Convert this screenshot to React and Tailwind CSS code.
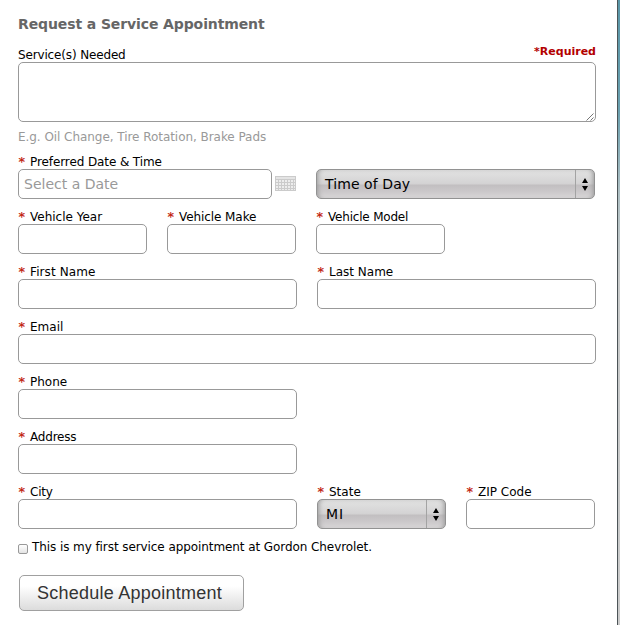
import React from 'react'

const Label = ({ children, tracking = '' }) => (
  <span className="flex h-[15px] items-center whitespace-nowrap text-[12px] leading-[15px] text-black">
    <span className="w-3 shrink-0 pl-[0.5px] text-[13px] text-[#c01808] [-webkit-text-stroke:0.2px_#c01808]">*</span>
    <span className={`pt-[2px] ${tracking}`}>{children}</span>
  </span>
)

const inputClass =
  'block h-[30px] w-full rounded-[5px] border border-[#999] bg-white px-[5px] text-[14px] text-black outline-none placeholder:text-[#999] placeholder:opacity-100'

const Field = ({ label, width, tracking }) => (
  <label className={`block ${width}`}>
    <Label tracking={tracking}>{label}</Label>
    <input type="text" className={inputClass} />
  </label>
)

const SelectBox = ({ value, tracking = '' }) => (
  <button
    type="button"
    className="flex h-[30px] w-full items-center rounded-[5px] border border-[#929292] bg-[linear-gradient(to_bottom,#dadada_0%,#dedede_15%,#d4d3d4_48%,#c2bfc1_55%,#cac7c9_75%,#d8d6d7_100%)] text-left text-[14px] text-black shadow-[inset_5px_0_5px_-4px_#999,inset_-5px_0_5px_-4px_#999]"
  >
    <span className={`flex-1 pl-2 ${tracking}`}>{value}</span>
    <span className="flex h-full w-[19px] items-center justify-center border-l border-[#a3a3a3] pt-px">
      <svg width="6" height="13" viewBox="0 0 6 13">
        <path d="M3 0 6 5H0ZM0 8h6L3 13Z" fill="#000" />
      </svg>
    </span>
  </button>
)

const CalendarIcon = () => (
  <svg width="21" height="15" viewBox="0 0 21 15" className="shrink-0">
    <rect width="21" height="15" fill="#cbcbcb" />
    <rect x="1" y="1" width="19" height="2" fill="#e4e4e4" />
    {[4, 7, 10, 13].map((y) =>
      [1, 4, 7, 10, 13, 16, 19].map((x) => (
        <rect key={`${x}-${y}`} x={x} y={y} width={x === 19 ? 1 : 2} height={y === 13 ? 1 : 2} fill="#ededed" />
      ))
    )}
  </svg>
)

const App = () => {
  return (
    <div className="flex h-[625px] w-[620px] overflow-hidden bg-white font-['DejaVu_Sans',Verdana,sans-serif]">
      <form className="w-[617px] shrink-0 pl-[18px]" onSubmit={(e) => e.preventDefault()}>
        <h1 className="mt-[14px] h-5 whitespace-nowrap text-[14px] leading-5 font-bold tracking-[-0.11px] text-[#666]">
          Request a Service Appointment
        </h1>

        {/* Services */}
        <div className="mt-[10px] flex h-[18px] w-[578px] items-start justify-between">
          <label
            htmlFor="services"
            className="mt-1 h-[15px] text-[12px] leading-[15px] tracking-[-0.15px] text-black"
          >
            Service(s) Needed
          </label>
          <span className="text-[11px] leading-[15px] font-bold text-[#b30000]">*Required</span>
        </div>
        <div className="relative h-[60px] w-[578px]">
          <textarea
            id="services"
            className="block h-[60px] w-full resize-none rounded-[5px] border border-[#999] bg-white outline-none"
          />
          <svg width="8" height="8" viewBox="0 0 8 8" className="absolute right-[2px] bottom-[1px]">
            <path d="M.5 7.5l7-7M4.5 7.5l3-3" stroke="#666" strokeWidth="0.9" fill="none" />
          </svg>
        </div>
        <p className="mt-[8px] h-[15px] text-[12px] leading-[15px] tracking-[-0.05px] whitespace-nowrap text-[#999]">
          E.g. Oil Change, Tire Rotation, Brake Pads
        </p>

        <div className="mt-[9px] space-y-[10px]">
          <div className="flex items-end">
            <label className="block w-[254px]">
              <Label tracking="tracking-[-0.1px]">Preferred Date &amp; Time</Label>
              <input type="text" placeholder="Select a Date" className={inputClass} />
            </label>
            <div className="mr-5 flex h-[30px] w-6 items-center justify-end pb-[2px]">
              <CalendarIcon />
            </div>
            <div className="w-[279px]">
              <SelectBox value="Time of Day" tracking="tracking-[0.08px]" />
            </div>
          </div>

          <div className="flex gap-5">
            <Field label="Vehicle Year" width="w-[129px]" />
            <Field label="Vehicle Make" width="w-[129px]" tracking="tracking-[-0.08px]" />
            <Field label="Vehicle Model" width="w-[129px]" tracking="tracking-[-0.2px]" />
          </div>

          <div className="flex gap-5">
            <Field label="First Name" width="w-[279px]" tracking="tracking-[0.1px]" />
            <Field label="Last Name" width="w-[279px]" />
          </div>

          <Field label="Email" width="w-[578px]" />
          <Field label="Phone" width="w-[279px]" />
          <Field label="Address" width="w-[279px]" tracking="tracking-[-0.2px]" />

          <div className="flex gap-5">
            <Field label="City" width="w-[279px]" tracking="tracking-[-0.2px]" />
            <div className="w-[129px]">
              <Label>State</Label>
              <SelectBox value="MI" tracking="tracking-[0.8px]" />
            </div>
            <Field label="ZIP Code" width="w-[129px]" />
          </div>
        </div>

        <label className="mt-[10px] flex h-4 items-center text-[12px] leading-4 tracking-[-0.08px] whitespace-nowrap text-black">
          <input
            type="checkbox"
            className="mt-[3px] mr-1 h-[10px] w-[10px] appearance-none rounded-[2px] border border-[#999] bg-linear-to-b from-white to-[#e4e4e4]"
          />
          <span>This is my first service appointment at Gordon Chevrolet.</span>
        </label>

        <button
          type="submit"
          className="mt-5 ml-px block h-9 w-[225px] rounded-[5px] border border-[#a0a0a0] bg-linear-to-b from-white from-30% to-[#dcdcdc] pl-[17px] text-left font-['Liberation_Sans',Arial,sans-serif] text-[18px] tracking-[0.24px] whitespace-nowrap text-[#333]"
        >
          Schedule Appointment
        </button>
      </form>

      {/* Window edge */}
      <div className="flex w-[3px] shrink-0">
        <div className="w-px bg-[#4c5457]" />
        <div className="w-[2px] bg-[linear-gradient(to_bottom,#5a96a7_0px,#6a9fae_110px,#adbfc3_190px,#c8caca_280px,#cbcbcb_625px)]" />
      </div>
    </div>
  )
}

export default App
